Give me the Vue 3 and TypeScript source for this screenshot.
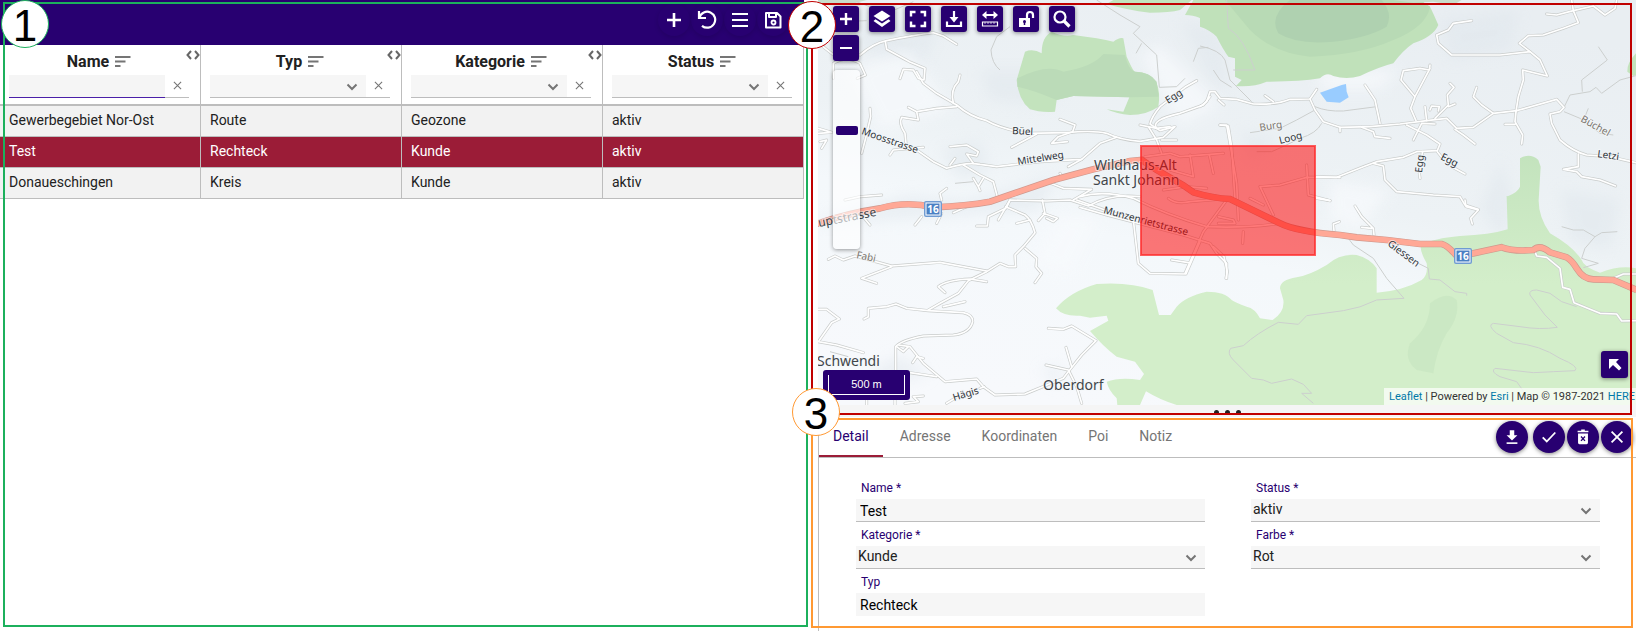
<script setup lang="ts">
import { ref } from 'vue'

interface Column { key: 'name' | 'typ' | 'kategorie' | 'status'; label: string; options: string[] }
interface Zone { name: string; typ: string; kategorie: string; status: string }
interface Tile { at: string; roads: string[]; paths: string[] }
interface MapLabel { text: string; x: number; y: number; angle: number; kind: string }

const columns: Column[] = [
  { key: 'name', label: 'Name', options: [] },
  { key: 'typ', label: 'Typ', options: ['Route', 'Rechteck', 'Kreis'] },
  { key: 'kategorie', label: 'Kategorie', options: ['Geozone', 'Kunde'] },
  { key: 'status', label: 'Status', options: ['aktiv', 'inaktiv'] },
]
const rows: Zone[] = [
  { name: 'Gewerbegebiet Nor-Ost', typ: 'Route', kategorie: 'Geozone', status: 'aktiv' },
  { name: 'Test', typ: 'Rechteck', kategorie: 'Kunde', status: 'aktiv' },
  { name: 'Donaueschingen', typ: 'Kreis', kategorie: 'Kunde', status: 'aktiv' },
]
const selected = ref(1)
const filters = ref<Record<string, string>>({ name: '', typ: '', kategorie: '', status: '' })
const zoomLevel = ref(33)

const tabs = ['Detail', 'Adresse', 'Koordinaten', 'Poi', 'Notiz']
const activeTab = ref('Detail')
const form = ref({ name: 'Test', status: 'aktiv', kategorie: 'Kunde', farbe: 'Rot', typ: 'Rechteck' })

const tiles: Tile[] = [
  {
    at: 'translate(780 0) scale(.33333)',
    roads: [
      'M240 165 Q280 130 320 122 Q400 105 460 98 L490 108 L530 133',
      'M316 124 L320 148 Q360 170 390 186 L435 205 L432 240 L415 235 L400 210 L370 208 L360 236',
      'M410 215 L430 250 L470 280 L530 315 Q570 350 620 362 Q660 385 740 400 L860 398 Q940 390 980 400 Q1020 420 1080 424 L1150 412 L1185 380 L1140 392 L1110 372 Q1115 350 1140 320 L1215 262 L1250 242',
      'M540 225 L535 245 Q510 270 520 310',
      'M1130 385 Q1110 360 1200 340 L1270 315 L1290 290',
      'M530 320 L470 325 L410 335 L385 322 M410 335 L415 360 L365 352 Q355 370 375 400 L378 430',
      'M840 358 L885 375 L878 395 L835 410 L815 430 L862 425 M770 402 L695 442',
      'M270 325 L272 350 L258 410 L245 460',
      'M410 450 L460 485 L500 505 Q560 485 600 493 L650 500 L780 485 L905 478 L960 430 L1010 412',
      'M510 440 L560 435 L595 455 L590 468 L560 462 L580 490 M510 495 L525 475 M550 495 L600 525 L640 545 L652 590',
      'M580 535 L595 560 L600 572 M610 535 L595 560 M865 500 L905 478',
      'M115 385 L155 397 L115 400 M120 425 L140 420 L125 445 M330 465 L340 450 L430 442',
      'M160 235 L160 190 Q200 165 240 190 L256 225 L232 235 M110 125 L180 180',
      'M840 520 L850 535 L800 545 L850 565 L935 568 L880 600',
      'M485 600 L480 580 L500 565 M195 600 L240 590 L305 585',
      'M655 660 L690 600 L800 603 L870 600 L925 618 Q990 580 1080 590',
    ],
    paths: [
      'M690 80 L650 110 L633 150 Q635 190 660 210', 'M950 0 L1020 45 L1080 80 L1060 100 L1130 165 L1138 262 L1190 260 L1215 235',
      'M1240 185 L1255 145 L1285 142 M525 550 L580 545', 'M230 5 L320 40 L400 5 M1085 130 L1068 160', 'M160 60 L180 65 L260 62',
    ],
  },
  {
    at: 'translate(1200 0) scale(.33333)',
    roads: [
      'M0 320 L20 305 L30 275 L45 275 L60 295 L110 298 L160 312 Q230 315 270 298 L330 297 L350 268',
      'M330 297 L345 330 L370 365 L420 382 L510 380 L600 372 L680 362 L740 355 L770 385 L820 382 L880 340 L950 332 L1070 298 L1092 322 L1080 335 L1050 342 L1055 370 L1080 420 Q1120 455 1160 465 L1230 470 L1308 488',
      'M495 255 L525 300 L540 370 M690 195 L688 210 L660 205 L610 212 L603 240 L645 290 L690 205 M645 290 L632 325 L648 362',
      'M750 250 L762 262 L742 285 L745 315 L705 355 M745 320 L765 312 M690 330 L695 318 L718 320 L715 333 M675 320 L680 362',
      'M830 262 L820 290 L845 315 L880 340 M915 373 L945 373 M948 335 L945 365 L968 405 L965 432',
      'M815 62 L760 70 L745 90 L710 105 L715 130 L755 165 L900 165 L990 155 L1020 180 L1042 228 L968 210 L970 240 L955 290 L948 335',
      'M1040 42 L1070 45 L1120 32 L1115 0 M1120 32 L1135 68 L1090 85 L1030 105 L985 107 L958 130 L990 155 M1120 32 L1180 18 L1215 45 L1245 25 L1250 0',
      'M485 382 L520 395 L525 410 L570 415 M620 375 L680 405 L720 432 L712 452 L650 455 L610 472 L530 485 L490 500 L410 532 L350 530',
      'M640 420 L665 370 L705 372 M765 388 L790 405 L825 432 M520 490 L550 498 L555 540 L590 575 L700 585 L780 590 L795 615 L835 628',
      'M712 455 L730 478 M755 500 L795 522 M668 455 L665 470 M658 520 L660 535 M420 382 L420 395',
      'M1135 462 L1135 500 L1090 508 L1130 515 L1145 530 L1200 540 L1247 558',
      'M60 375 L85 378 L95 440 L105 600 M350 595 L390 602 M55 300 L72 315 M195 287 L220 305',
    ],
    paths: [
      'M80 0 L85 85 Q130 110 165 210 L100 210', 'M0 138 Q60 150 75 180 L90 240 L155 305 M40 210 L60 240 L95 262',
      'M345 320 Q380 335 430 333 L530 320', 'M150 398 L240 385 L290 360 L345 330 M365 370 Q350 400 300 415 Q250 440 215 455 L170 455',
      'M1092 322 L1110 285 L1170 275 L1188 262 L1205 280 L1260 240 L1308 227 M1195 140 L1222 180 L1145 240 L1147 275',
      'M1092 335 L1140 355 L1200 400 L1240 405 M1165 325 L1155 350',
    ],
  },
  {
    at: 'translate(780 200) scale(.33333)',
    roads: [
      'M677 20 L735 45 Q755 60 765 98 L730 140 L705 165 L707 200 L685 200 L660 190 L620 215 L565 242 L535 280 L480 310 L445 330',
      'M735 145 L770 175 L768 200 L785 220 L765 248 M677 25 L625 50 L622 78 L590 78',
      'M787 0 L795 40 L775 62 M790 40 L832 55 L820 65 L800 55 M710 70 L750 60',
      'M145 178 L165 168 L190 180 L225 168 L335 198 L480 187 L620 213 M335 200 L245 235 L290 250',
      'M495 278 L475 260 Q500 240 570 237 L620 245',
      'M252 357 L265 350 L265 325 L320 320 L348 312 L380 325 L445 332 L550 338 Q580 345 578 365 Q570 400 520 405 L430 408 Q365 420 347 440 L347 510',
      'M490 320 L555 305 M110 328 L140 328 L178 357 L155 368 L115 425 L170 435 L250 458 M115 425 L80 430',
      'M355 435 L390 440 L430 490 L495 545 L590 537 L610 560 L645 585 L735 582 L850 535 L865 515 L905 465 L948 422 L875 378 L850 388 L805 385',
      'M350 440 L370 455 L385 440 M430 475 L410 470 L398 488 M390 518 L470 530 M858 442 L875 500 M798 495 L865 510 L890 560 L905 610',
      'M260 614 L260 600 M375 610 L415 605 L400 590 L430 588 M345 614 L345 600 M500 610 L525 595 M600 565 L612 560',
      'M890 0 L975 30 L1060 60 L1075 190 L1110 220 L1218 222 L1260 125 M1175 180 L1225 188',
      'M690 0 L680 22 M245 45 L270 75 M470 70 L485 40 M520 38 L560 20 M405 75 L425 50',
    ],
    paths: ['M150 455 L205 470'],
  },
  {
    at: 'translate(1200 200) scale(.33333)',
    roads: [
      'M465 18 L485 50 L520 85 L522 105 M485 82 L515 85 M418 65 L400 72 L402 92 M795 0 L798 20 L835 30 L812 55 L817 72',
      'M1003 150 L1010 168 L1040 172 L1080 205 L1088 262 L1110 268 L1122 308 L1200 340 L1250 342 L1265 363 L1308 362',
      'M40 140 L72 170 L82 215 L78 235 M1240 235 L1270 222 L1308 222',
    ],
    paths: [
      'M445 115 L460 135 L520 175 L560 235 L612 295 L530 300 Q480 325 430 332 L320 347 L295 373 L235 367 Q170 400 130 437 L92 445 Q80 460 100 480 L155 535 L190 540 L215 550 L275 537 L310 553 L335 580 L305 580 L340 610',
      'M655 190 L685 205 L688 237 L720 240 L765 275 L800 280 L800 287', 'M990 285 Q985 270 1010 270 L1050 280 L1085 305 L1130 320',
      'M990 285 L1035 345 L1072 382 Q1020 390 960 380 L880 370 Q860 375 890 400 L940 428 Q1020 435 1080 475 Q1140 500 1125 512 Q1060 515 1000 518 L885 505 Q870 515 900 530 L950 545 L975 580',
      'M1085 80 L1120 90 L1150 90 L1185 110 L1205 98 L1252 95 M1185 110 L1155 145 L1145 175 L1195 190 L1150 203',
    ],
  },
  {
    at: 'translate(1080 120) scale(.33333)',
    roads: [
      'M0 230 Q70 210 160 235 Q260 285 380 320 Q500 325 600 310 M0 262 L80 285 L310 345 L390 370 L410 400 L440 430 L440 475',
      'M195 110 L270 100 L300 110 L430 100 M330 105 L340 170 M388 105 L400 160 M340 170 L270 150 M420 15 L440 15 L455 100 L470 190 L475 300',
      'M580 285 L540 200 L600 195 L680 172 L780 172 M680 135 L685 225 L750 242 M440 240 L370 335 L315 460',
      'M265 235 Q290 255 330 245 L450 235 M250 210 L320 200 L380 205 M415 290 L460 300 L465 310 L415 310 M510 235 L550 255 M490 335 L488 370',
      'M205 20 L230 60 L245 100 M180 15 L230 25 L270 20 M245 60 L290 60',
    ],
    paths: [],
  },
]

const highway = [
  'M110 672 Q200 640 300 625 Q380 602 460 622 Q560 618 630 605 L820 540 L940 508 L1050 483 L1085 480 L1130 510 L1210 556 L1240 577 Q1300 595 1350 597 L1500 670 Q1550 695 1680 705 L1730 712 L1820 720 L1920 732 L1985 732 Q2000 735 2025 762 L2080 760 L2165 742 Q2200 755 2260 750 Q2280 732 2310 757 L2360 772 Q2375 780 2390 805 Q2410 838 2440 838 L2500 840 L2570 870',
]

const labels: MapLabel[] = [
  { text: 'Wildhaus-Alt', x: 1094, y: 170, angle: 0, kind: 'town' },
  { text: 'Sankt Johann', x: 1093, y: 185, angle: 0, kind: 'town' },
  { text: 'Schwendi', x: 817, y: 366, angle: 0, kind: 'town' },
  { text: 'Oberdorf', x: 1043, y: 390, angle: 0, kind: 'town' },
  { text: 'uptstrasse', x: 819, y: 227, angle: -11, kind: 'main' },
  { text: 'Moosstrasse', x: 861, y: 134, angle: 19, kind: 'street' },
  { text: 'Büel', x: 1012, y: 134, angle: 3, kind: 'street' },
  { text: 'Mittelweg', x: 1018, y: 165, angle: -9, kind: 'street' },
  { text: 'Egg', x: 1168, y: 104, angle: -32, kind: 'street' },
  { text: 'Munzenrietstrasse', x: 1103, y: 213, angle: 15, kind: 'street' },
  { text: 'Fabi', x: 856, y: 258, angle: 12, kind: 'lane' },
  { text: 'Hägis', x: 954, y: 401, angle: -17, kind: 'street' },
  { text: 'Burg', x: 1260, y: 131, angle: -9, kind: 'lane' },
  { text: 'Loog', x: 1280, y: 144, angle: -14, kind: 'street' },
  { text: 'Egg', x: 1422, y: 173, angle: -84, kind: 'street' },
  { text: 'Egg', x: 1440, y: 159, angle: 27, kind: 'street' },
  { text: 'Büchel', x: 1580, y: 121, angle: 29, kind: 'lane' },
  { text: 'Letzi', x: 1597, y: 157, angle: 8, kind: 'street' },
  { text: 'Giessen', x: 1387, y: 245, angle: 37, kind: 'street' },
]
</script>

<template>
  <main class="page">
    <section class="list-panel">
      <header class="bar">
        <button class="bar-btn" aria-label="Hinzufügen">
          <svg viewBox="0 0 20 20"><path d="M10 3v14M3 10h14" stroke-width="2.6" /></svg>
        </button>
        <button class="bar-btn" aria-label="Zurücksetzen">
          <svg viewBox="0 0 20 20"><path d="M2 1v7h7M2.5 7.500A8 8 0 1 1 5 15.800" stroke-width="2.2" /></svg>
        </button>
        <button class="bar-btn" aria-label="Menü">
          <svg viewBox="0 0 20 20"><path d="M2 4h16M2 10h16M2 16h16" stroke-width="2.2" /></svg>
        </button>
        <button class="bar-btn" aria-label="Speichern">
          <svg viewBox="0 0 20 20"><path d="M3 3h11l3.500 3.500V17.500H3zM6 3v4h7V3" stroke-width="2" stroke-linejoin="round" /><circle cx="10.500" cy="12.500" r="2" stroke-width="1.800" /></svg>
        </button>
      </header>
      <table class="zones">
        <thead>
          <tr>
            <th v-for="(col, i) in columns" :key="col.key" scope="col">
              <div class="title">
                <span>{{ col.label }}</span>
                <svg class="sort" viewBox="0 0 16 12"><path d="M0 2h15.500M0 6.500h10.500M0 11h5.500" /></svg>
              </div>
              <div class="filter">
                <input v-if="i === 0" v-model="filters[col.key]" class="filter-text" type="text" :aria-label="col.label + ' filtern'" />
                <div v-else class="pick">
                  <select v-model="filters[col.key]" :aria-label="col.label + ' filtern'">
                    <option value=""></option>
                    <option v-for="o in col.options" :key="o">{{ o }}</option>
                  </select>
                  <svg class="chevron" viewBox="0 0 12 8"><path d="M1.500 1.500L6 6l4.500-4.500" /></svg>
                </div>
                <button class="clear" :aria-label="col.label + ' leeren'" @click="filters[col.key] = ''">
                  <svg viewBox="0 0 10 10"><path d="M1 1l8 8M9 1l-8 8" /></svg>
                </button>
              </div>
              <svg v-if="i < 3" class="resize" viewBox="0 0 14 10"><path d="M5 1L1.500 5L5 9M9 1l3.500 4L9 9" /></svg>
            </th>
          </tr>
        </thead>
        <tbody>
          <tr v-for="(row, r) in rows" :key="row.name" :class="{ selected: r === selected }" @click="selected = r">
            <td v-for="col in columns" :key="col.key">{{ row[col.key] }}</td>
          </tr>
        </tbody>
      </table>
      <div class="frame frame-green"></div>
      <div class="badge badge-green">1</div>
    </section>

    <section class="side">
      <div class="map-panel">
        <div class="map">
          <svg class="canvas" viewBox="818 0 818 405" preserveAspectRatio="xMinYMin slice">
            <defs>
              <linearGradient id="land" x1="0.700" y1="0" x2="0.300" y2="1">
                <stop offset="0" stop-color="#e9eef2" /><stop offset="0.450" stop-color="#edf2f5" /><stop offset="0.620" stop-color="#f4f8fb" /><stop offset="1" stop-color="#f7f9fc" />
              </linearGradient>
              <linearGradient id="wood" gradientUnits="userSpaceOnUse" x1="0" y1="-140" x2="0" y2="250">
                <stop offset="0" stop-color="#c3e3bd" /><stop offset="1" stop-color="#d3eeca" />
              </linearGradient>
              <filter id="soft"><feGaussianBlur stdDeviation="7" /></filter>
            </defs>
            <rect x="818" width="818" height="405" fill="url(#land)" />
            <g filter="url(#soft)" fill="#dfe6ec" opacity=".5">
              <path d="M980 70h90l-20 35-60-5zM1180 20l40 10 10 60-20-10zM860 20l80 10-20 40-60-20zM940 150l40-10 10 30-30 10zM1440 20l80-10-10 40-60 10zM1480 210l20-50 14 40-10 40zM1560 190l60 10-10 50-40-10zM1240 130l40 10-30 20z" />
              <path d="M818 220l90-25 60 5 90-25-20 35-220 15z" />
              <path d="M870 370l30-15 30 20-50 10zM1040 370l20-4v20z" />
            </g>
            <g filter="url(#soft)" fill="#f8fafd" opacity=".7">
              <path d="M850 70l60-20 40 60-70 20zM1140 55l20-10 60 60-40 20zM1320 70l80 0-20 20-60 0zM1330 180l60 10-30 40-30-10zM1060 215l40 0-30 60-40-10z" />
            </g>
            <g transform="translate(780 0) scale(.33333)">
              <path fill="#c3e3bd" d="M710 240L735 155Q760 145 785 160Q785 110 815 95Q850 112 880 105Q960 115 1000 125Q1020 110 1030 115L1040 170Q1060 215 1065 215Q1110 215 1130 250Q1142 280 1135 320Q1100 345 1050 345Q1010 342 980 328L1030 335L1048 292L880 288L830 300L825 335Q780 338 750 328Q715 300 710 240Z" />
              <path fill="#bbdbb8" d="M712 235Q800 190 850 215Q940 200 970 162L1035 165Q1045 210 1065 215Q1110 215 1130 245L1136 290L1048 292L880 288L830 300Q760 270 712 260Z" />
              <path fill="#c3e3bd" d="M980 12L1000 0H1235L1200 30Q1170 38 1110 38Q1040 30 980 12ZM1240 0H1310V90Q1290 90 1280 75Q1265 45 1215 45Z" />
              <path fill="#c9dcca" d="M110 0H260L215 12H115Z" />
            </g>
            <g transform="translate(1200 0) scale(.33333)">
              <path fill="#c0e1ba" d="M0 0V80Q30 90 50 110Q70 150 85 170L105 175V230L125 240L108 258Q160 262 200 245Q300 245 360 235Q380 215 400 228Q440 240 480 228Q540 200 580 190Q610 150 640 130Q700 110 715 75Q700 40 690 20L660 0Z" />
              <path fill="#b8dab5" d="M75 0L150 90Q220 160 330 170Q480 165 580 120Q680 80 690 20L660 0Z" />
              <path fill="#afd1b0" d="M270 0Q205 50 235 100Q290 135 400 125Q500 115 560 80Q580 40 545 0Z" />
              <path fill="#c9dcca" d="M580 0H785L760 15L700 5L640 8Z" />
              <path fill="#c3e3bd" d="M1308 160Q1280 190 1282 215L1300 228L1308 225Z" />
              <path fill="#99ccff" d="M360 278L425 255L438 252L440 275L446 292L420 308L380 305Z" />
            </g>
            <g transform="translate(1200 200) scale(.33333)">
              <path fill="url(#wood)" d="M960 -125Q990 -142 1015 -120L1022 -100L1016 0Q1015 50 1050 100Q1120 140 1145 180Q1150 200 1200 218Q1260 195 1308 205V615H-70Q-120 600 -162 574L-180 615H-248L-250 595Q-275 570 -280 545Q-240 530 -180 540L-168 522L-195 485L-250 470Q-290 440 -330 393L-275 362L-280 347L-330 353L-360 347Q-410 350 -432 325Q-390 275 -310 252Q-210 245 -142 270L-123 345H-88L-70 320Q-45 290 20 275Q75 275 95 300Q100 305 140 320Q165 325 180 355L218 360Q255 335 250 300L240 265Q240 240 290 232Q330 225 380 195Q420 160 470 165Q510 175 530 205V278Q610 272 665 240Q685 225 680 190Q655 145 665 135Q700 115 780 108Q870 105 923 88L920 -10Q915 -10 925 -12Q955 -25 960 -40Z" />
              <path fill="#c7e5bf" opacity=".6" d="M690 310Q740 270 770 300Q780 350 740 400Q710 450 700 520L650 510Q610 480 630 430Q690 380 690 310Z" />
            </g>
            <g v-for="t in tiles" :key="'p' + t.at" :transform="t.at" class="paths"><path v-for="d in t.paths" :key="d" :d="d" /></g>
            <g v-for="t in tiles" :key="'c' + t.at" :transform="t.at" class="casing"><path v-for="d in t.roads" :key="d" :d="d" /></g>
            <g v-for="t in tiles" :key="'r' + t.at" :transform="t.at" class="roads"><path v-for="d in t.roads" :key="d" :d="d" /></g>
            <g v-for="d in highway" :key="d" transform="translate(780 0) scale(.33333)" fill="none">
              <path :d="d" stroke="#cf988d" stroke-width="20" /><path :d="d" stroke="#ffa896" stroke-width="16" />
            </g>
            <g v-for="s in [[933, 209], [1463, 256]]" :key="s[0]" :transform="`translate(${s[0]} ${s[1]})`">
              <rect x="-9" y="-8" width="18" height="16" rx="2" fill="#6f9bd2" />
              <rect x="-7" y="-6" width="14" height="12" fill="#4a80c4" stroke="#fff" stroke-width="1" />
              <text class="shield" text-anchor="middle" y="4">16</text>
            </g>
            <text v-for="l in labels" :key="l.text + l.x" :class="l.kind" :transform="`translate(${l.x} ${l.y}) rotate(${l.angle})`">{{ l.text }}</text>
            <rect x="1141" y="146" width="174" height="109" fill="#ff0000" fill-opacity=".53" stroke="#ff2a2a" stroke-opacity=".75" stroke-width="2" />
          </svg>
          <div class="tools">
            <div class="zoom">
              <button class="tool" aria-label="Vergrössern"><svg viewBox="0 0 20 20"><path d="M10 4v12M4 10h12" stroke-width="2.400" /></svg></button>
              <button class="tool" aria-label="Verkleinern"><svg viewBox="0 0 20 20"><path d="M4 10h12" stroke-width="2" /></svg></button>
              <input v-model="zoomLevel" class="slider" type="range" min="0" max="100" aria-label="Zoomstufe" />
            </div>
            <button class="tool" aria-label="Ebenen"><svg viewBox="0 0 20 20"><path class="solid" d="M10 1.500L18.500 7L10 12.500L1.500 7z" /><path class="solid" d="M3.500 10.300L1.500 12L10 18L18.500 12L16.500 10.300L10 14.500z" /></svg></button>
            <button class="tool" aria-label="Vollbild"><svg viewBox="0 0 20 20"><path d="M3 7.500V3h4.500M12.500 3H17v4.500M17 12.500V17h-4.500M7.500 17H3v-4.500" stroke-width="2.400" /></svg></button>
            <button class="tool" aria-label="Exportieren"><svg viewBox="0 0 20 20"><path d="M10 2v7M3 12.500v4.500h14v-4.500" stroke-width="2.200" /><path class="solid" d="M5.500 8h9L10 13.500z" /></svg></button>
            <button class="tool" aria-label="Messen"><svg viewBox="0 0 20 20"><path d="M4 6h12" stroke-width="2" /><path class="solid" d="M6.500 2v8L2 6zM13.500 2v8L18 6z" /><path d="M2.500 13h15v4h-15z" stroke-width="1.200" /><path d="M5 13v2M8 13v2M11 13v2M14 13v2" stroke-width=".7" /></svg></button>
            <button class="tool" aria-label="Entsperren"><svg viewBox="0 0 20 20"><path class="solid" d="M3 9h11v9H3z" /><path d="M11 9V6a3 3 0 0 1 6 0v3" stroke-width="2.200" /><circle cx="8.500" cy="12.500" r="1.500" fill="#280071" stroke="none" /><path d="M8.500 13v3" class="hole" /></svg></button>
            <button class="tool" aria-label="Suchen"><svg viewBox="0 0 20 20"><circle cx="8" cy="8" r="5.500" stroke-width="2.200" /><path d="M12 12l5.500 5.500" stroke-width="3.200" /></svg></button>
          </div>
          <div class="scale"><span>500 m</span></div>
          <button class="tool corner" aria-label="Übersicht"><svg viewBox="0 0 20 20"><path class="solid" d="M4 4h10l-3 3 5.500 6-2.500 2.500L8 10l-4 4z" /></svg></button>
          <div class="credits"><a href="#">Leaflet</a> | Powered by <a href="#">Esri</a> | Map © 1987-2021 <a href="#">HERE</a></div>
        </div>
        <div class="splitter"><i></i><i></i><i></i></div>
        <div class="frame frame-red"></div>
        <div class="badge badge-red">2</div>
      </div>

      <div class="detail">
        <div class="tab-bar">
          <nav class="tabs" role="tablist">
            <button v-for="t in tabs" :key="t" role="tab" :aria-selected="t === activeTab" :class="['tab', { active: t === activeTab }]" @click="activeTab = t">{{ t }}</button>
          </nav>
          <div class="actions">
            <button class="round first" aria-label="Herunterladen"><svg viewBox="0 0 20 20"><path class="solid" d="M7.500 2.500h5V8H16l-6 6-6-6h3.500z" /><path d="M4 16.800h12" stroke-width="1.800" /></svg></button>
            <button class="round" aria-label="Übernehmen"><svg viewBox="0 0 20 20"><path d="M3 10.500l4.500 4.500L17 5" stroke-width="2" /></svg></button>
            <button class="round" aria-label="Löschen"><svg viewBox="0 0 20 20"><path class="solid" d="M4.500 6h11v10.500a1.500 1.500 0 0 1-1.500 1.500H6a1.500 1.500 0 0 1-1.500-1.500z" /><path d="M4 3.800h12M8 2.600h4" stroke-width="1.600" /><path class="hole" d="M7.800 9.500l4.400 4.800M12.200 9.500l-4.400 4.800" /></svg></button>
            <button class="round" aria-label="Schliessen"><svg viewBox="0 0 20 20"><path d="M4 4l12 12M16 4L4 16" stroke-width="2" /></svg></button>
          </div>
        </div>
        <form class="fields" @submit.prevent>
          <div class="field">
            <label for="f-name">Name *</label>
            <input id="f-name" v-model="form.name" type="text" />
          </div>
          <div class="field">
            <label for="f-status">Status *</label>
            <div class="pick">
              <select id="f-status" v-model="form.status"><option>aktiv</option><option>inaktiv</option></select>
              <svg class="chevron" viewBox="0 0 12 8"><path d="M1.500 1.500L6 6l4.500-4.500" /></svg>
            </div>
          </div>
          <div class="field">
            <label for="f-kategorie">Kategorie *</label>
            <div class="pick">
              <select id="f-kategorie" v-model="form.kategorie"><option>Kunde</option><option>Geozone</option></select>
              <svg class="chevron" viewBox="0 0 12 8"><path d="M1.500 1.500L6 6l4.500-4.500" /></svg>
            </div>
          </div>
          <div class="field">
            <label for="f-farbe">Farbe *</label>
            <div class="pick">
              <select id="f-farbe" v-model="form.farbe"><option>Rot</option><option>Blau</option></select>
              <svg class="chevron" viewBox="0 0 12 8"><path d="M1.500 1.500L6 6l4.500-4.500" /></svg>
            </div>
          </div>
          <div class="field">
            <label for="f-typ">Typ</label>
            <input id="f-typ" class="plain" :value="form.typ" type="text" readonly />
          </div>
        </form>
        <div class="frame frame-orange"></div>
        <div class="badge badge-orange">3</div>
      </div>
    </section>
  </main>
</template>

<style>
body { background: #fff; overflow: hidden; }
</style>

<style scoped>
* { box-sizing: border-box; }
button, input, select { font: inherit; color: inherit; border: 0; padding: 0; margin: 0; background: none; outline: none; border-radius: 0; }
svg { display: block; fill: none; }
button { cursor: pointer; }
button svg { stroke: #fff; }
.solid { fill: #fff; stroke: none; }
.hole { stroke: #280071; stroke-width: 1.5; }

.page { display: grid; grid-template-columns: 804fr 818fr; column-gap: 14px; height: 100vh; font-family: Roboto, "Liberation Sans", sans-serif; font-size: 14px; color: #212121; }
.list-panel { position: relative; min-width: 0; }

.bar { display: flex; justify-content: flex-end; align-items: flex-start; gap: 1px; height: 45px; padding: 4px 15px 0 0; background: #280071; }
.bar-btn { display: grid; place-items: center; width: 32px; height: 32px; border-radius: 50%; box-shadow: 0 2px 5px rgba(0, 0, 0, .12); }
.bar-btn svg { width: 20px; height: 20px; }

.zones { width: 100%; table-layout: fixed; border-collapse: separate; border-spacing: 0; }
th { position: relative; padding: 4px 11px 6px 9px; border-right: 1px solid #bdbdbd; border-bottom: 2px solid #bdbdbd; font-weight: 700; }
.title { display: flex; align-items: center; justify-content: center; gap: 6px; height: 24px; margin-bottom: 2px; font-size: 16px; }
.sort { width: 16px; height: 12px; stroke: #757575; stroke-width: 2; }
.resize { position: absolute; top: 5px; right: 0; width: 14px; height: 10px; stroke: #666; stroke-width: 2; }
.filter { display: grid; grid-template-columns: minmax(0, 1fr) 24px; height: 23px; border-bottom: 1px solid #bdbdbd; font-weight: 400; }
.filter-text { width: 100%; height: 23px; background: #f5f5f5; border-bottom: 1px solid #4a1fa8; }
.clear { display: grid; place-items: center; height: 20px; }
.clear svg { width: 9px; height: 9px; stroke: #757575; stroke-width: 1.2; }
td { height: 31px; padding: 0 9px 2px; border-right: 1px solid #bdbdbd; border-bottom: 1px solid #bdbdbd; background: #f2f2f2; }
.selected td { background: #9b1c37; color: #fff; }

.pick { position: relative; background: #f6f6f6; }
.pick select { display: block; width: 100%; height: 22px; appearance: none; }
.chevron { position: absolute; right: 8px; top: 8px; width: 12px; height: 8px; stroke: #757575; stroke-width: 2; pointer-events: none; }

.side { display: flex; flex-direction: column; min-width: 0; }
.map-panel { position: relative; display: flex; flex-direction: column; flex: 1; min-height: 0; }
.map { position: relative; flex: 1; min-height: 0; overflow: hidden; }
.canvas { position: absolute; inset: 0; width: 100%; height: 100%; }
.paths { fill: none; stroke: #cccfce; stroke-width: 3; stroke-linejoin: round; }
.casing { fill: none; stroke: #c9cccb; stroke-width: 9; stroke-linecap: round; stroke-linejoin: round; }
.roads { fill: none; stroke: #fff; stroke-width: 5; stroke-linecap: round; stroke-linejoin: round; }
.town, .street, .lane, .main { font-family: "Noto Sans", sans-serif; fill: #41464b; paint-order: stroke; stroke: rgba(245, 248, 250, .6); stroke-width: 2px; }
.town { font-size: 14px; }
.main { font-size: 12px; }
.street { font-size: 10px; fill: #2e3338; }
.lane { font-size: 10px; fill: #7b756e; }
.shield { font: 700 10px "Noto Sans", sans-serif; fill: #fff; }

.tools { position: absolute; top: 6px; left: 15px; display: flex; align-items: flex-start; gap: 10px; }
.zoom { display: flex; flex-direction: column; gap: 3px; width: 26px; }
.tool { display: grid; place-items: center; width: 26px; height: 26px; background: #280071; border-radius: 3px; box-shadow: 0 1px 4px rgba(0, 0, 0, .45); }
.tool svg { width: 20px; height: 20px; }
.slider { appearance: none; writing-mode: vertical-lr; width: 27px; height: 179px; margin-top: 6px; border-radius: 4px; background: rgba(255, 255, 255, .6); box-shadow: 0 1px 4px rgba(0, 0, 0, .4); }
.slider::-webkit-slider-thumb { appearance: none; width: 22px; height: 9px; border-radius: 2px; background: #280071; }
.scale { position: absolute; left: 5px; bottom: 5px; width: 87px; height: 30px; padding: 5px; border-radius: 3px; background: #280071; color: #fff; font: 11px "Liberation Sans", Arial, sans-serif; text-align: center; }
.scale span { display: block; height: 20px; line-height: 18px; border: 1px solid #fff; border-top: 0; }
.corner { position: absolute; right: 8px; bottom: 27px; width: 27px; height: 27px; }
.credits { position: absolute; right: 0; bottom: 0; height: 17px; padding: 0 1px 0 5px; line-height: 17px; font-size: 11px; white-space: nowrap; background: rgba(255, 255, 255, .7); color: #333; }
.credits a { color: #0078a8; text-decoration: none; }
.splitter { display: flex; justify-content: center; gap: 6px; height: 12px; padding-top: 5px; background: #f5f5f5; }
.splitter i { width: 5px; height: 5px; border-radius: 50%; background: #222; }

.detail { position: relative; border-left: 1px solid #bdbdbd; padding-bottom: 15px; }
.tab-bar { display: flex; justify-content: space-between; align-items: center; height: 41px; border-bottom: 1px solid #bdbdbd; }
.tabs { display: flex; gap: 3px; height: 100%; }
.tab { padding: 0 14px; border-bottom: 2px solid transparent; color: #757575; }
.tab.active { color: #280071; border-bottom-color: #9b1c37; }
.actions { display: flex; gap: 2px; padding-right: 3px; }
.round { display: grid; place-items: center; width: 32px; height: 32px; border-radius: 50%; background: #280071; box-shadow: 0 1px 4px rgba(0, 0, 0, .5); }
.round svg { width: 18px; height: 18px; }
.round.first { margin-right: 3px; }

.fields { display: grid; grid-template-columns: minmax(0, 1fr) minmax(0, 1fr); column-gap: 46px; padding: 17px 36px 0 37px; }
.field label { display: block; height: 24px; line-height: 26px; padding-left: 5px; font-size: 12px; color: #280071; }
.field > input { display: block; width: 100%; height: 23px; padding: 2px 4px 0; color: #000; background: #f6f6f6; border-bottom: 1px solid #bdbdbd; }
.field > input.plain { border-bottom-color: transparent; }
.field .pick { border-bottom: 1px solid #bdbdbd; }
.field select { padding: 0 2px 2px; }

.frame { position: absolute; border: 2px solid; pointer-events: none; }
.frame-green { inset: 2px -4px 4px 3px; border-color: #1cb05c; }
.frame-red { inset: 3px 4px 2px -7px; border-color: #c00000; }
.frame-orange { inset: 1px 3px 3px -8px; border-color: #ff9933; }
.badge { position: absolute; display: grid; place-items: center; width: 48px; height: 48px; padding-bottom: 2px; border: 1px solid; border-radius: 50%; background: #fff; color: #000; font: 44px "Liberation Sans", Arial, sans-serif; z-index: 1; }
.badge-green { left: 1px; top: 0; border-color: #1cb05c; }
.badge-red { left: -30px; top: 1px; border-color: #c00000; }
.badge-orange { left: -27px; top: -29px; border-color: #ff9933; }
</style>
